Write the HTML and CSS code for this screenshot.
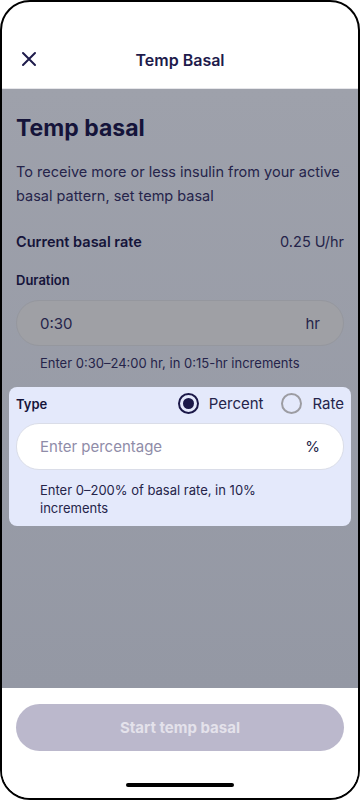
FILE: index.html
```html
<!DOCTYPE html>
<html lang="en">
<head>
  <meta charset="UTF-8">
  <meta name="viewport" content="width=device-width, initial-scale=1.0">
  <title>Temp Basal</title>
  <link rel="stylesheet" href="styles.css">
</head>
<body>
  <div class="phone">
    <div class="header">
      <span class="close-btn">
        <svg width="16" height="16" viewBox="0 0 16 16">
          <path d="M2 2 L14 14 M14 2 L2 14" stroke="#1e1b4b" stroke-width="2" stroke-linecap="round"/>
        </svg>
      </span>
      <div class="header-title">Temp Basal</div>
    </div>

    <div class="content">
      <h1 class="page-title">Temp basal</h1>
      <p class="intro">To receive more or less insulin from your active basal pattern, set temp basal</p>

      <div class="rate-row">
        <span class="rate-label">Current basal rate</span>
        <span class="rate-value">0.25 U/hr</span>
      </div>

      <div class="field-label">Duration</div>
      <div class="input-pill disabled">
        <span class="input-value">0:30</span>
        <span class="input-unit">hr</span>
      </div>
      <div class="hint">Enter 0:30–24:00 hr, in 0:15-hr increments</div>

      <!-- Highlighted type section -->
      <div class="type-card">
        <div class="type-row">
          <span class="field-label">Type</span>
          <div class="radios">
            <span class="radio checked"></span>
            <span class="radio-text">Percent</span>
            <span class="radio"></span>
            <span class="radio-text">Rate</span>
          </div>
        </div>
        <div class="input-pill">
          <span class="placeholder">Enter percentage</span>
          <span class="input-unit">%</span>
        </div>
        <div class="hint">Enter 0–200% of basal rate, in 10% increments</div>
      </div>
    </div>

    <div class="footer">
      <button class="start-btn">Start temp basal</button>
      <div class="home-bar"></div>
    </div>
  </div>
</body>
</html>
```

FILE: styles.css
```css
* {
  margin: 0;
  padding: 0;
  box-sizing: border-box;
}

body {
  font-family: Inter, "Noto Sans", sans-serif;
  background-color: #fff;
  color: #1e1d45;
}

.phone {
  width: 360px;
  height: 800px;
  border: 2px solid #000;
  border-radius: 30px;
  overflow: hidden;
  display: flex;
  flex-direction: column;
  background-color: #fff;
}

.header {
  height: 87px;
  flex-shrink: 0;
  display: flex;
  align-items: flex-end;
  justify-content: center;
  padding-bottom: 18px;
  position: relative;
  border-bottom: 1px solid #e6e6ea;
}

.close-btn {
  position: absolute;
  left: 19px;
  bottom: 21px;
  width: 16px;
  height: 16px;
}

.header-title {
  font-size: 16px;
  font-weight: 600;
  line-height: 20px;
  color: #1e1b4b;
}

/* Dimmed area */
.content {
  flex: 1;
  background: linear-gradient(#9ea1ab, #9498a4);
  padding: 24px 14px 0;
}

.page-title {
  font-size: 23px;
  font-weight: 700;
  line-height: 30px;
  color: #15143a;
}

.intro {
  margin-top: 17px;
  font-size: 14.5px;
  line-height: 24px;
  color: #25244a;
}

.rate-row {
  margin-top: 22px;
  display: flex;
  justify-content: space-between;
  line-height: 24px;
  font-size: 14.5px;
}

.rate-label {
  font-weight: 600;
  color: #15143a;
}

.rate-value {
  color: #25244a;
}

.field-label {
  margin-top: 16px;
  font-size: 13px;
  font-weight: 600;
  line-height: 20px;
  color: #15143a;
}

.input-pill {
  margin-top: 10px;
  height: 46px;
  border-radius: 23px;
  background-color: #fff;
  border: 1px solid #dadde8;
  display: flex;
  align-items: center;
  justify-content: space-between;
  padding: 0 23px;
  font-size: 15px;
}

.input-pill.disabled {
  background-color: #9fa0a5;
  border-color: #95979e;
}

.input-value,
.input-unit {
  color: #25244a;
}

.placeholder {
  color: #8f8ca8;
}

.hint {
  margin-top: 8px;
  padding: 0 24px;
  font-size: 13px;
  line-height: 18px;
  color: #25244a;
}

.type-card {
  margin: 15px -7px 0;
  padding: 4px 7px 9px;
  background-color: #e4e9fb;
  border-radius: 8px;
}

.type-row {
  height: 24px;
  display: flex;
  align-items: center;
  justify-content: space-between;
}

.type-row .field-label {
  margin-top: 2px;
}

.radios {
  display: flex;
  align-items: center;
  font-size: 15px;
  color: #25244a;
}

.radio {
  width: 21px;
  height: 21px;
  border-radius: 50%;
  border: 2px solid #9c9ca2;
  margin-right: 10px;
  display: flex;
  align-items: center;
  justify-content: center;
}

.radio.checked {
  border-color: #1b1848;
}

.radio.checked::after {
  content: "";
  width: 11px;
  height: 11px;
  border-radius: 50%;
  background-color: #1b1848;
}

.radio-text + .radio {
  margin-left: 18px;
}

.type-card .input-pill {
  margin-top: 8px;
  height: 47px;
}

.type-card .hint {
  margin-top: 11px;
}

.footer {
  height: 110px;
  flex-shrink: 0;
  background-color: #fff;
  padding: 16px 14px 0;
  display: flex;
  flex-direction: column;
  align-items: center;
}

.start-btn {
  width: 100%;
  height: 47px;
  border: none;
  border-radius: 24px;
  background-color: #bbb8cc;
  color: #e4e2eb;
  font-family: inherit;
  font-size: 15px;
  font-weight: 700;
}

.home-bar {
  margin-top: 32px;
  width: 108px;
  height: 4px;
  border-radius: 2px;
  background-color: #000;
}
```
